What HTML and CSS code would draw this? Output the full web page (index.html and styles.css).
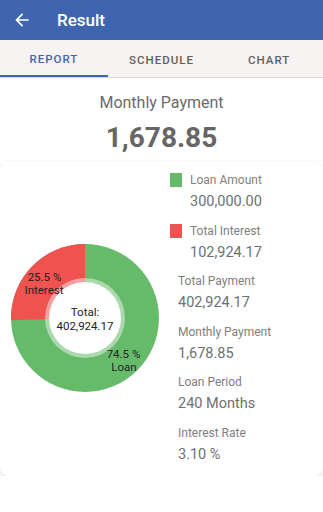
FILE: index.html
```html
<!DOCTYPE html>
<html lang="en">
<head>
  <meta charset="UTF-8" />
  <meta name="viewport" content="width=device-width, initial-scale=1.0"/>
  <title>Result</title>
  <link rel="stylesheet" href="styles.css">
</head>
<body>

  <header class="app-bar">
    <svg class="back" viewBox="0 0 24 24" width="20" height="20">
      <path d="M20 11H7.83l5.59-5.59L12 4l-8 8 8 8 1.41-1.41L7.83 13H20v-2z" fill="#fff"/>
    </svg>
    <span class="app-title">Result</span>
  </header>

  <nav class="tabs">
    <div class="tab active">REPORT</div>
    <div class="tab">SCHEDULE</div>
    <div class="tab">CHART</div>
  </nav>

  <div class="summary">
    <div class="summary-label">Monthly Payment</div>
    <div class="summary-value">1,678.85</div>
  </div>

  <div class="card">
    <div class="chart-col">
      <svg class="donut" viewBox="0 0 148 148" width="148" height="148">
        <circle cx="74" cy="74" r="74" fill="#66bb6a"/>
        <path d="M74 74 L74 0 A74 74 0 0 0 0.04 76.3 Z" fill="#ef5350"/>
        <circle cx="74" cy="74" r="40" fill="rgba(255,255,255,0.45)"/>
        <circle cx="74" cy="74" r="36" fill="#fff"/>
        <text x="33.5" y="37" class="slice-text">25.5 %</text>
        <text x="33" y="49.5" class="slice-text">Interest</text>
        <text x="74" y="72" class="slice-text">Total:</text>
        <text x="74" y="86" class="slice-text">402,924.17</text>
        <text x="112.5" y="114" class="slice-text">74.5 %</text>
        <text x="113" y="127" class="slice-text">Loan</text>
      </svg>
    </div>

    <div class="info-col">
      <div class="item legend">
        <span class="swatch green"></span>
        <div>
          <div class="label">Loan Amount</div>
          <div class="value">300,000.00</div>
        </div>
      </div>
      <div class="item legend">
        <span class="swatch red"></span>
        <div>
          <div class="label">Total Interest</div>
          <div class="value">102,924.17</div>
        </div>
      </div>
      <div class="item plain">
        <div class="label">Total Payment</div>
        <div class="value">402,924.17</div>
      </div>
      <div class="item plain">
        <div class="label">Monthly Payment</div>
        <div class="value">1,678.85</div>
      </div>
      <div class="item plain">
        <div class="label">Loan Period</div>
        <div class="value">240 Months</div>
      </div>
      <div class="item plain">
        <div class="label">Interest Rate</div>
        <div class="value">3.10 %</div>
      </div>
    </div>
  </div>

</body>
</html>
```

FILE: styles.css
```css
body {
  font-family: Roboto, 'Liberation Sans', sans-serif;
  margin: 0;
  background: #fff;
  color: #666;
}

.app-bar {
  height: 40px;
  background-color: #3f65b0;
  display: flex;
  align-items: center;
  padding-left: 12px;
  gap: 25px;
}

.back {
  display: block;
}

.app-title {
  color: #fff;
  font-size: 17px;
  font-weight: 500;
}

.tabs {
  display: flex;
  height: 37px;
  background-color: #f6f3f2;
  border-bottom: 1px solid #dcdcdc;
}

.tab {
  flex: 1;
  display: flex;
  align-items: center;
  justify-content: center;
  font-size: 11.5px;
  font-weight: 500;
  letter-spacing: 1px;
  color: #606060;
  box-sizing: border-box;
  padding-top: 2px;
}

.tab.active {
  color: #3f65b0;
  border-bottom: 2px solid #3f65b0;
}

.summary {
  text-align: center;
  padding-top: 15px;
}

.summary-label {
  font-size: 16px;
  line-height: 20px;
  color: #6a6a6a;
}

.summary-value {
  margin-top: 8px;
  font-size: 28px;
  line-height: 34px;
  font-weight: bold;
  color: #666;
}

.card {
  margin-top: 6px;
  display: flex;
  align-items: center;
  background: #fff;
  border-radius: 8px;
  box-shadow: 0 1px 3px rgba(0, 0, 0, 0.16);
  padding: 10px 0 10px;
}

.chart-col {
  width: 170px;
  display: flex;
  justify-content: center;
}

.donut {
  display: block;
}

.slice-text {
  font-family: Roboto, 'Liberation Sans', sans-serif;
  font-size: 11.5px;
  fill: #222;
  text-anchor: middle;
}

.info-col {
  display: flex;
  flex-direction: column;
  gap: 8.5px;
}

.item.legend {
  display: flex;
  gap: 8px;
}

.item.plain {
  padding-left: 8px;
}

.swatch {
  width: 12px;
  height: 14px;
  margin-top: 2px;
}

.swatch.green {
  background: #66bb6a;
}

.swatch.red {
  background: #ef5350;
}

.label {
  font-size: 12px;
  line-height: 18px;
  color: #808080;
}

.value {
  margin-top: 2px;
  font-size: 14.5px;
  line-height: 22px;
  color: #707070;
}
```
